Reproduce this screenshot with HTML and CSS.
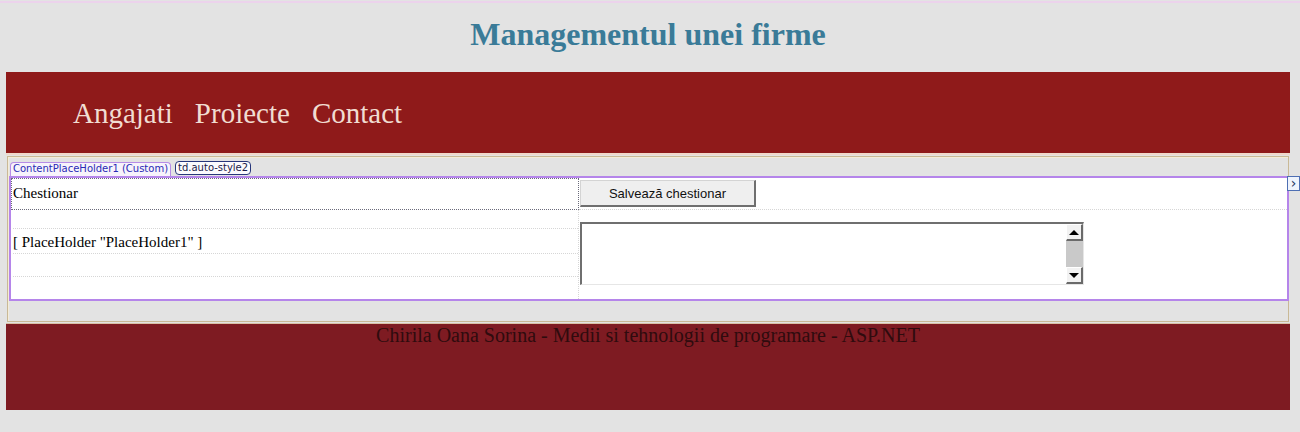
FILE: index.html
```html
<!DOCTYPE html>
<html>
<head>
<meta charset="utf-8">
<link rel="stylesheet" href="styles.css">
</head>
<body>
<div class="topline"></div>
<div class="page">
  <h1 class="title">Managementul unei firme</h1>
  <header class="menu">
    <nav class="nav">
      <a>Angajati</a>
      <a>Proiecte</a>
      <a>Contact</a>
    </nav>
  </header>
  <div class="content">
    <div class="frame">
      <div class="tabs">
        <span class="tab tab-cph">ContentPlaceHolder1 (Custom)</span>
        <span class="tab tab-td">td.auto-style2</span>
      </div>
      <div class="region">
        <span class="smart">&#8250;</span>
        <div class="grid">
          <div class="cell cell-sel">Chestionar</div>
          <div class="cell cell-btn"><button class="btn">Salvează chestionar</button></div>
          <div class="cell cell-ph">
            <div class="ph">[ PlaceHolder "PlaceHolder1" ]</div>
            <div class="ph-gap"></div>
          </div>
          <div class="cell cell-ta">
            <div class="textarea">
              <div class="ta-body"></div>
              <div class="scroll">
                <div class="sbtn"><span class="tri up"></span></div>
                <div class="track"></div>
                <div class="sbtn"><span class="tri down"></span></div>
              </div>
            </div>
          </div>
        </div>
      </div>
    </div>
  </div>
  <footer class="footer">Chirila Oana Sorina - Medii si tehnologii de programare - ASP.NET</footer>
</div>
</body>
</html>
```
FILE: styles.css
```css
html, body {
  margin: 0;
  padding: 0;
  background: #e3e3e3;
}
body {
  font-family: "Liberation Serif", "Times New Roman", serif;
  height: 432px;
  overflow: hidden;
}
.topline {
  height: 2px;
  margin-top: 1px;
  background: #ecd3ec;
}
.page {
  margin: 0 10px 0 6px;
}
.title {
  margin: 0;
  padding-top: 13px;
  height: 56px;
  line-height: 37px;
  font-size: 32px;
  font-weight: bold;
  text-align: center;
  color: #3a7b98;
}
.menu {
  height: 81px;
  background: #8f1a1a;
  box-sizing: border-box;
  padding: 25px 0 0 67px;
}
.nav {
  display: flex;
  gap: 22px;
  font-size: 29px;
  line-height: 33px;
  color: #f1ddd2;
}
.content {
  height: 170px;
  border-top: 2px solid #f0d9cb;
  box-sizing: border-box;
  padding: 1px 1px 0 1px;
}
.frame {
  position: relative;
  height: 166px;
  box-sizing: border-box;
  border: 1px solid #c9b996;
  box-shadow: inset 1px 1px 0 #f3ecd9;
  padding: 4px 0 0 1px;
}
.tabs {
  display: flex;
  align-items: flex-end;
  gap: 4px;
  height: 15px;
  padding-left: 1px;
  font-family: "DejaVu Sans", Tahoma, sans-serif;
  font-size: 10px;
}
.tab {
  display: inline-block;
  line-height: 12px;
  padding: 0 2px;
  border-radius: 4px 4px 0 0;
}
.tab-cph {
  color: #2a2ab5;
  border: 1px solid #b68ce6;
  border-bottom: none;
  height: 13px;
  background: #f7f3fb;
}
.tab-td {
  color: #1b1b4a;
  border: 1px solid #27367a;
  border-radius: 4px;
  background: #fbfbfd;
  height: 12px;
  align-self: flex-start;
}
.region {
  position: relative;
  height: 125px;
  box-sizing: border-box;
  border: 2px solid #b585ea;
  background: #fff;
  margin-right: -1px;
}
.smart {
  position: absolute;
  right: -13px;
  top: -2px;
  width: 13px;
  height: 15px;
  box-sizing: border-box;
  border: 1px solid #4e6fb3;
  background: #eef3fc;
  font-family: "DejaVu Sans", sans-serif;
  font-size: 14px;
  line-height: 12px;
  text-align: center;
  color: #24335e;
}
.grid {
  display: grid;
  grid-template-columns: 568px 1fr;
  grid-template-rows: 32px 89px;
  height: 121px;
}
.cell {
  box-sizing: border-box;
  font-size: 15px;
}
.cell-sel {
  border: 1px dotted #6a6a7a;
  padding: 5px 0 0 1px;
  line-height: 18px;
}
.cell-btn {
  padding: 2px 0 0 1px;
  border-bottom: 1px dotted #d6d6d6;
}
.btn {
  width: 176px;
  height: 27px;
  box-sizing: border-box;
  background: #efefef;
  border-top: 1px solid #d4d4d4;
  border-left: 1px solid #d4d4d4;
  border-right: 2px solid #6f6f6f;
  border-bottom: 2px solid #6f6f6f;
  font-family: "Liberation Sans", Arial, sans-serif;
  font-size: 13px;
  color: #111;
  padding: 0;
  margin: 0;
}
.cell-ph {
  padding: 18px 0 0 2px;
  border-right: 1px dotted #d6d6d6;
}
.ph {
  border-top: 1px dotted #d6d6d6;
  border-bottom: 1px dotted #d6d6d6;
  height: 26px;
  box-sizing: border-box;
  line-height: 24px;
  padding-top: 1px;
}
.ph-gap {
  height: 22px;
  border-bottom: 1px dotted #d6d6d6;
}
.cell-ta {
  padding: 12px 0 0 1px;
}
.textarea {
  display: flex;
  width: 504px;
  height: 63px;
  box-sizing: border-box;
  border-top: 2px solid #6f6f6f;
  border-left: 2px solid #6f6f6f;
  border-right: 1px solid #e6e6e6;
  border-bottom: 1px solid #e6e6e6;
  background: #fff;
}
.ta-body {
  flex: 1;
}
.scroll {
  width: 17px;
  display: flex;
  flex-direction: column;
}
.sbtn {
  height: 17px;
  box-sizing: border-box;
  background: #f2f2f2;
  border-top: 1px solid #fff;
  border-left: 1px solid #fff;
  border-right: 2px solid #6a6a6a;
  border-bottom: 2px solid #6a6a6a;
  display: flex;
  align-items: center;
  justify-content: center;
}
.track {
  flex: 1;
  background: #c9c9c9;
}
.tri {
  width: 0;
  height: 0;
  border-left: 5px solid transparent;
  border-right: 5px solid transparent;
}
.tri.up {
  border-bottom: 5px solid #000;
}
.tri.down {
  border-top: 5px solid #000;
}
.footer {
  height: 87px;
  background: #7e1b22;
  border-top: 1px solid #d9c2a6;
  box-sizing: border-box;
  text-align: center;
  font-size: 20px;
  line-height: 22px;
  color: #2f0b0e;
}
```
